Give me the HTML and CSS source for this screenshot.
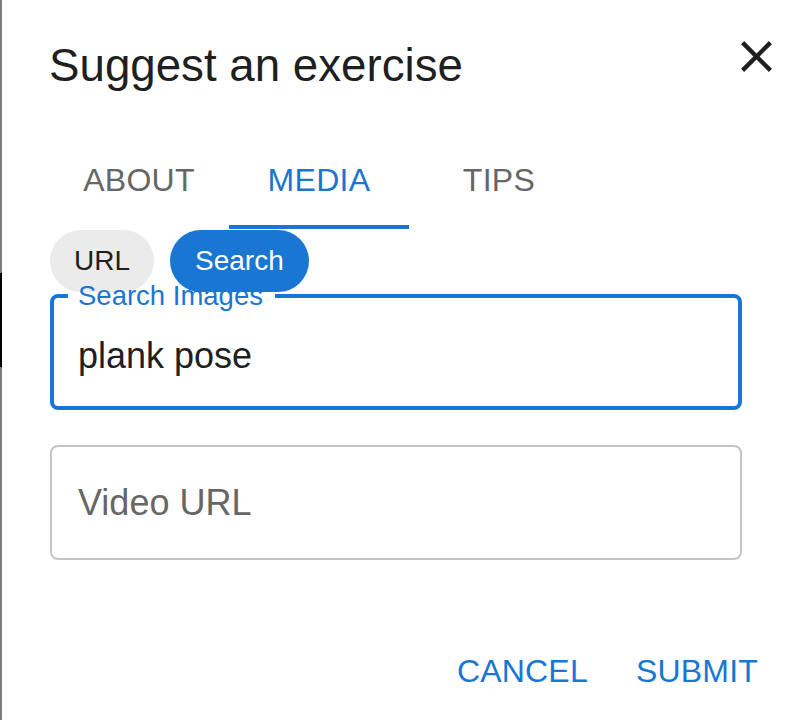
FILE: index.html
```html
<!DOCTYPE html>
<html lang="en">
<head>
<meta charset="utf-8">
<title>Suggest an exercise</title>
<link rel="stylesheet" href="styles.css">
</head>
<body>
<div class="dialog">
  <div class="header">
    <h2 class="title">Suggest an exercise</h2>
    <button class="close" aria-label="Close">
      <svg viewBox="0 0 24 24" width="53" height="53"><path d="M19 6.41 17.59 5 12 10.59 6.41 5 5 6.41 10.59 12 5 17.59 6.41 19 12 13.41 17.59 19 19 17.59 13.41 12z"/></svg>
    </button>
  </div>
  <div class="content">
    <div class="tabs">
      <div class="tab">ABOUT</div>
      <div class="tab active">MEDIA</div>
      <div class="tab">TIPS</div>
    </div>
    <div class="chips">
      <span class="chip">URL</span>
      <span class="chip chip-active">Search</span>
    </div>
    <div class="field field-focused">
      <span class="field-label">Search Images</span>
      <span class="field-value">plank pose</span>
    </div>
    <div class="field field-plain">
      <span class="field-placeholder">Video URL</span>
    </div>
  </div>
  <div class="actions">
    <button class="text-btn">CANCEL</button>
    <button class="text-btn">SUBMIT</button>
  </div>
</div>
</body>
</html>
```
FILE: styles.css
```css
* { box-sizing: border-box; }
html, body { margin: 0; padding: 0; background: #fff; }
body {
  font-family: "Liberation Sans", Arial, Helvetica, sans-serif;
  color: #1f1f1f;
}
.dialog {
  position: relative;
  width: 788px;
  height: 720px;
  border-left: 2px solid #7c7c7c;
  background: #fff;
}
.dialog::before {
  content: "";
  position: absolute;
  left: -2px;
  top: 273px;
  width: 2px;
  height: 94px;
  background: #000;
}
.header {
  display: flex;
  justify-content: space-between;
  align-items: flex-start;
  padding: 30px 5px 0 47px;
}
.title {
  margin: 9px 0 0 0;
  font-size: 45.7px;
  line-height: 53px;
  font-weight: 400;
  color: #1f1f1f;
}
.close {
  width: 53px;
  height: 53px;
  padding: 0;
  border: 0;
  background: none;
  display: flex;
}
.close svg { fill: #1f1f1f; }
.content {
  padding: 0 46px 0 47px;
}
.tabs {
  display: flex;
  margin-top: 42px;
  height: 95px;
}
.tab {
  width: 180px;
  display: flex;
  align-items: center;
  justify-content: center;
  padding-bottom: 2px;
  font-size: 32px;
  color: #666;
  letter-spacing: 0.3px;
}
.tab.active {
  color: #1976d2;
  box-shadow: inset 0 -4px 0 #1976d2;
}
.chips {
  display: flex;
  gap: 16px;
  margin-top: 1px;
  padding-left: 1px;
}
.chip {
  height: 62px;
  padding: 0 24px;
  border-radius: 31px;
  background: #ebebeb;
  display: flex;
  align-items: center;
  font-size: 28px;
  color: #1f1f1f;
}
.chip-active {
  background: #1976d2;
  color: #fff;
  padding: 0 25px;
}
.field {
  position: relative;
  margin-left: 1px;
  border-radius: 8px;
  display: flex;
  align-items: center;
  padding-left: 24px;
}
.field-focused {
  margin-top: 2px;
  height: 116px;
  border: 4px solid #1976d2;
  padding-top: 8px;
}
.field-plain {
  margin-top: 35px;
  height: 115px;
  border: 2px solid #c4c4c4;
  padding-left: 26px;
}
.field-label {
  position: absolute;
  left: 14px;
  top: -5px;
  height: 6px;
  line-height: 6px;
  padding: 0 12px 0 10px;
  background: #fff;
  font-size: 27.5px;
  color: #1976d2;
  white-space: nowrap;
}
.field-value {
  font-size: 36px;
  color: #1f1f1f;
}
.field-placeholder {
  font-size: 36px;
  color: #666;
}
.actions {
  display: flex;
  justify-content: flex-end;
  gap: 16px;
  margin-top: 75px;
  padding-right: 14px;
}
.text-btn {
  font-family: inherit;
  font-size: 32px;
  color: #1976d2;
  background: none;
  border: 0;
  padding: 0 16px;
  height: 73px;
  letter-spacing: 0.2px;
}
```
